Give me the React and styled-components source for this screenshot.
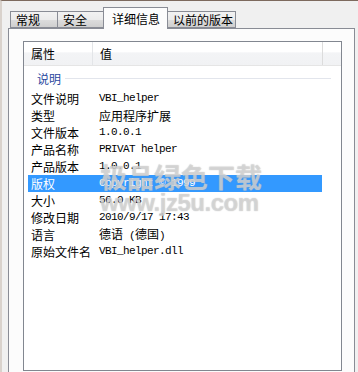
import styled, { createGlobalStyle } from 'styled-components';

const GlobalStyle = createGlobalStyle`
  html, body {
    margin: 0;
    padding: 0;
    background: #f0f0f0;
    overflow: hidden;
  }
  body {
    font-family: "Noto Sans CJK SC", "Liberation Sans", sans-serif;
    font-size: 12px;
    color: #000;
  }
`

const Window = styled.div`
  width: 358px;
  height: 372px;
  box-sizing: border-box;
  border-top: 1px solid #7d6a5e;
  border-left: 2px solid #d9d2cc;
  padding: 6px 0 0 6px;
  position: relative;
  overflow: hidden;
`

const TabStrip = styled.div`
  display: flex;
  align-items: flex-end;
  height: 21px;
  padding-left: 2px;
  position: relative;
  z-index: 1;
`

const Tab = styled.div`
  box-sizing: border-box;
  width: ${({ w }) => w}px;
  height: ${({ active }) => (active ? '22px' : '17px')};
  margin-bottom: ${({ active }) => (active ? '-1px' : '0')};
  padding: ${({ active, pad }) => (active ? `1px 0 0 ${pad}px` : `0 0 0 ${pad}px`)};
  border: 1px solid #898c95;
  border-bottom: ${({ active }) => (active ? 'none' : '1px solid #898c95')};
  margin-left: -1px;
  background: ${({ active }) =>
    active ? '#fcfcfc' : 'linear-gradient(#f2f2f2 0%, #ebebeb 50%, #dddddd 51%, #cfcfcf 100%)'};
  display: flex;
  align-items: center;
  line-height: 14px;
  white-space: nowrap;
  &:first-child {
    margin-left: 0;
  }
`

const Panel = styled.div`
  box-sizing: border-box;
  width: 347px;
  height: 360px;
  border: 1px solid #898c95;
  background: #fcfcfc;
  padding: 12px 12px 0 14px;
`

const ListView = styled.div`
  box-sizing: border-box;
  width: 319px;
  height: 330px;
  border: 1px solid #828790;
  background: #fff;
  position: relative;
`

const Header = styled.div`
  display: flex;
  height: 23px;
  border-bottom: 1px solid #e5e5e5;
  background: linear-gradient(#ffffff 0%, #ffffff 45%, #f3f4f6 46%, #f1f2f4 100%);
`

const HeaderCell = styled.div`
  box-sizing: border-box;
  width: ${({ w }) => w}px;
  padding-left: 7px;
  display: flex;
  align-items: center;
  border-right: 1px solid ${({ last }) => (last ? '#dcdcdc' : '#e3e5e8')};
`

const GroupRow = styled.div`
  display: flex;
  align-items: center;
  height: 24px;
  padding-left: 13px;
  padding-right: 10px;
  gap: 4px;
  color: #2a48a0;
`

const GroupLine = styled.div`
  flex: 1;
  height: 1px;
  background: #e2e5ec;
`

const Row = styled.div`
  display: flex;
  align-items: center;
  height: 17px;
  width: 294px;
  margin-left: 4px;
  background: ${({ selected }) => (selected ? '#3399ff' : 'transparent')};
  color: ${({ selected }) => (selected ? '#fff' : '#000')};
`

const Label = styled.div`
  width: 71px;
  padding-left: 3px;
  box-sizing: border-box;
  white-space: nowrap;
  line-height: 17px;
`

const Value = styled.div`
  font-family: ${({ cjk }) => (cjk ? '"Noto Sans CJK SC", sans-serif' : '"Liberation Mono", "Noto Sans CJK SC", monospace')};
  font-size: ${({ cjk }) => (cjk ? '12px' : '11px')};
  letter-spacing: ${({ cjk }) => (cjk ? '0' : '-0.6px')};
  white-space: nowrap;
  line-height: 17px;
`

const Paren = styled.span`
  font-family: "Liberation Mono", monospace;
  font-size: 11px;
  letter-spacing: -0.6px;
`

const Watermark = styled.div`
  position: absolute;
  left: 76px;
  top: 120px;
  display: flex;
  flex-direction: column;
  pointer-events: none;
  color: rgba(230, 230, 230, 0.6);
  font-weight: 700;
  text-shadow: 0 0 1px rgba(150, 150, 150, 0.7);
`

const MarkTitle = styled.div`
  font-family: "Noto Sans CJK SC", sans-serif;
  font-size: 27px;
  line-height: 30px;
`

const MarkUrl = styled.div`
  font-family: "Liberation Sans", sans-serif;
  font-size: 24px;
  line-height: 22px;
  letter-spacing: -0.5px;
`

const rows = [
  ['文件说明', 'VBI_helper'],
  ['类型', '应用程序扩展', true],
  ['文件版本', '1.0.0.1'],
  ['产品名称', 'PRIVAT helper'],
  ['产品版本', '1.0.0.1'],
  ['版权', 'Copyright © 1999'],
  ['大小', '56.0 KB'],
  ['修改日期', '2010/9/17 17:43'],
  ['语言', 'lang', true],
  ['原始文件名', 'VBI_helper.dll'],
]

const tabs = [
  { name: '常规', w: 48, pad: 5 },
  { name: '安全', w: 47, pad: 5 },
  { name: '详细信息', w: 65, pad: 8 },
  { name: '以前的版本', w: 69, pad: 5 },
]

const App = () => {
  return (
    <>
      <GlobalStyle />
      <Window>
        <TabStrip>
          {tabs.map((t) => (
            <Tab key={t.name} w={t.w} pad={t.pad} active={t.name === '详细信息'}>{t.name}</Tab>
          ))}
        </TabStrip>
        <Panel>
          <ListView>
            <Header>
              <HeaderCell w={69}>属性</HeaderCell>
              <HeaderCell w={230} last>值</HeaderCell>
            </Header>
            <GroupRow>
              <span>说明</span>
              <GroupLine />
            </GroupRow>
            {rows.map(([label, value, cjk]) => (
              <Row key={label} selected={label === '版权'}>
                <Label>{label}</Label>
                {value === 'lang' ? (
                  <Value cjk>德语<Paren> (</Paren>德国<Paren>)</Paren></Value>
                ) : (
                  <Value cjk={cjk}>{value}</Value>
                )}
              </Row>
            ))}
            <Watermark>
              <MarkTitle>极品绿色下载</MarkTitle>
              <MarkUrl>www.jz5u.com</MarkUrl>
            </Watermark>
          </ListView>
        </Panel>
      </Window>
    </>
  )
}

export default App
